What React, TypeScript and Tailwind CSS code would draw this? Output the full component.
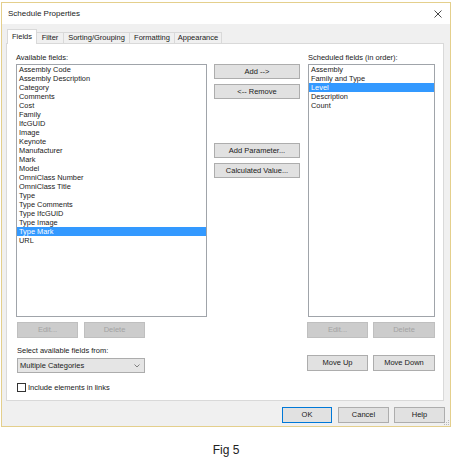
import React from 'react';

const availableFields = [
  'Assembly Code',
  'Assembly Description',
  'Category',
  'Comments',
  'Cost',
  'Family',
  'IfcGUID',
  'Image',
  'Keynote',
  'Manufacturer',
  'Mark',
  'Model',
  'OmniClass Number',
  'OmniClass Title',
  'Type',
  'Type Comments',
  'Type IfcGUID',
  'Type Image',
  'Type Mark',
  'URL',
];

const scheduledFields = ['Assembly', 'Family and Type', 'Level', 'Description', 'Count'];

const tabs = [
  { label: 'Fields', w: 'w-[30px]' },
  { label: 'Filter', w: 'w-[27px]' },
  { label: 'Sorting/Grouping', w: 'w-[66px]' },
  { label: 'Formatting', w: 'w-[45px]' },
  { label: 'Appearance', w: 'w-[47px]' },
];

interface BtnProps {
  label: string;
  className?: string;
  disabled?: boolean;
  primary?: boolean;
}

const Btn: React.FC<BtnProps> = ({ label, className = '', disabled, primary }) => (
  <div
    className={`flex items-center justify-center border text-[7.5px] leading-none ${
      disabled
        ? 'bg-[#cccccc] border-[#bfbfbf] text-[#a3a3a3]'
        : primary
        ? 'bg-[#e1e1e1] border-[#0078d7] text-[#1a1a1a]'
        : 'bg-[#e1e1e1] border-[#adadad] text-[#1a1a1a]'
    } ${className}`}
  >
    {label}
  </div>
);

const ListBox: React.FC<{ items: string[]; selected: string; className: string }> = ({ items, selected, className }) => (
  <div className={`bg-white border border-[#a0a4aa] ${className}`}>
    {items.map(item => (
      <div
        key={item}
        className={`h-[9px] leading-[9px] pl-[2px] text-[7.4px] whitespace-nowrap ${
          item === selected ? 'bg-[#3399ff] text-white' : 'text-[#1a1a1a]'
        }`}
      >
        {item}
      </div>
    ))}
  </div>
);

export default function App() {
  return (
    <div className="w-[452px] h-[461px] bg-white relative overflow-hidden font-['Liberation_Sans',Arial,sans-serif] text-[#1a1a1a]">
      {/* window */}
      <div className="relative ml-[1px] mt-[2px] w-[450px] h-[425px] border border-[#e4cf8c] flex flex-col bg-[#f0f0f0]">
        {/* title bar */}
        <div className="h-[21px] bg-white flex items-center justify-between pl-[6px] pr-[8px]">
          <span className="text-[8px]">Schedule Properties</span>
          <svg width="8" height="8" viewBox="0 0 8 8">
            <path d="M0.5 0.5 L7.5 7.5 M7.5 0.5 L0.5 7.5" stroke="#333" strokeWidth="0.9" />
          </svg>
        </div>

        {/* body */}
        <div className="px-[4px] pt-[5px] flex flex-col">
          {/* tabs */}
          <div className="flex items-end h-[14px] pl-[1px] relative z-10">
            {tabs.map((t, i) => (
              <div
                key={t.label}
                className={`${t.w} flex items-center justify-center text-[7.5px] leading-none border-[#d9d9d9] ${
                  i === 0
                    ? 'h-[15px] -mb-px bg-white border-t border-l border-r'
                    : 'h-[11px] bg-[#f0f0f0] border-t border-r'
                }`}
              >
                {t.label}
              </div>
            ))}
          </div>

          {/* panel */}
          <div className="w-[438px] h-[358px] bg-white border border-[#d9d9d9] flex pl-[9px]">
            {/* left column */}
            <div className="w-[191px] flex flex-col">
              <div className="mt-[9px] h-[9px] leading-[9px] text-[7.5px]">Available fields:</div>
              <ListBox items={availableFields} selected="Type Mark" className="mt-[2px] w-[191px] h-[253px]" />
              <div className="mt-[5px] ml-[1px] flex gap-[6px]">
                <Btn label="Edit..." disabled className="w-[61px] h-[16px]" />
                <Btn label="Delete" disabled className="w-[61px] h-[16px]" />
              </div>
              <div className="mt-[8px] ml-[1px] h-[9px] leading-[9px] text-[7.5px]">Select available fields from:</div>
              <div className="mt-[3px] ml-[1px] w-[128px] h-[15px] bg-[#e5e5e5] border border-[#acacac] flex items-center justify-between pl-[2px] pr-[4px]">
                <span className="text-[7.5px] leading-none">Multiple Categories</span>
                <svg width="6" height="4" viewBox="0 0 6 4">
                  <path d="M0.5 0.5 L3 3 L5.5 0.5" fill="none" stroke="#555" strokeWidth="0.7" />
                </svg>
              </div>
              <div className="mt-[10px] ml-[1px] flex items-center gap-[2px]">
                <div className="w-[9px] h-[9px] border border-[#333] bg-white" />
                <span className="text-[7.5px] leading-none">Include elements in links</span>
              </div>
            </div>

            {/* middle column */}
            <div className="ml-[7px] w-[86px] flex flex-col">
              <Btn label="Add -->" className="mt-[20px] h-[15px]" />
              <Btn label="<-- Remove" className="mt-[5px] h-[15px]" />
              <Btn label="Add Parameter..." className="mt-[44px] h-[15px]" />
              <Btn label="Calculated Value..." className="mt-[5px] h-[15px]" />
            </div>

            {/* right column */}
            <div className="ml-[7px] w-[128px] flex flex-col">
              <div className="mt-[9px] ml-[1px] h-[9px] leading-[9px] text-[7.5px] whitespace-nowrap">
                Scheduled fields (in order):
              </div>
              <ListBox items={scheduledFields} selected="Level" className="mt-[2px] ml-[1px] w-[127px] h-[253px]" />
              <div className="mt-[5px] flex gap-[5px]">
                <Btn label="Edit..." disabled className="w-[61px] h-[16px]" />
                <Btn label="Delete" disabled className="w-[62px] h-[16px]" />
              </div>
              <div className="mt-[17px] flex gap-[5px]">
                <Btn label="Move Up" className="w-[61px] h-[16px]" />
                <Btn label="Move Down" className="w-[62px] h-[16px]" />
              </div>
            </div>
          </div>

          {/* footer */}
          <div className="mt-[6px] mr-[1px] flex justify-end gap-[6px]">
            <Btn label="OK" primary className="w-[50px] h-[16px]" />
            <Btn label="Cancel" className="w-[51px] h-[16px]" />
            <Btn label="Help" className="w-[51px] h-[16px] -ml-px" />
          </div>
        </div>

        {/* resize grip */}
        <svg className="absolute right-[0px] bottom-[0px]" width="6" height="6" viewBox="0 0 6 6">
          <rect x="4" y="0" width="1" height="1" fill="#b8b8b8" />
          <rect x="2" y="2" width="1" height="1" fill="#b8b8b8" />
          <rect x="4" y="2" width="1" height="1" fill="#b8b8b8" />
          <rect x="0" y="4" width="1" height="1" fill="#b8b8b8" />
          <rect x="2" y="4" width="1" height="1" fill="#b8b8b8" />
          <rect x="4" y="4" width="1" height="1" fill="#b8b8b8" />
        </svg>
      </div>

      <div className="mt-[16px] flex justify-center">
        <span className="text-[12px] leading-[14px] text-[#222]">Fig 5</span>
      </div>
    </div>
  );
}
